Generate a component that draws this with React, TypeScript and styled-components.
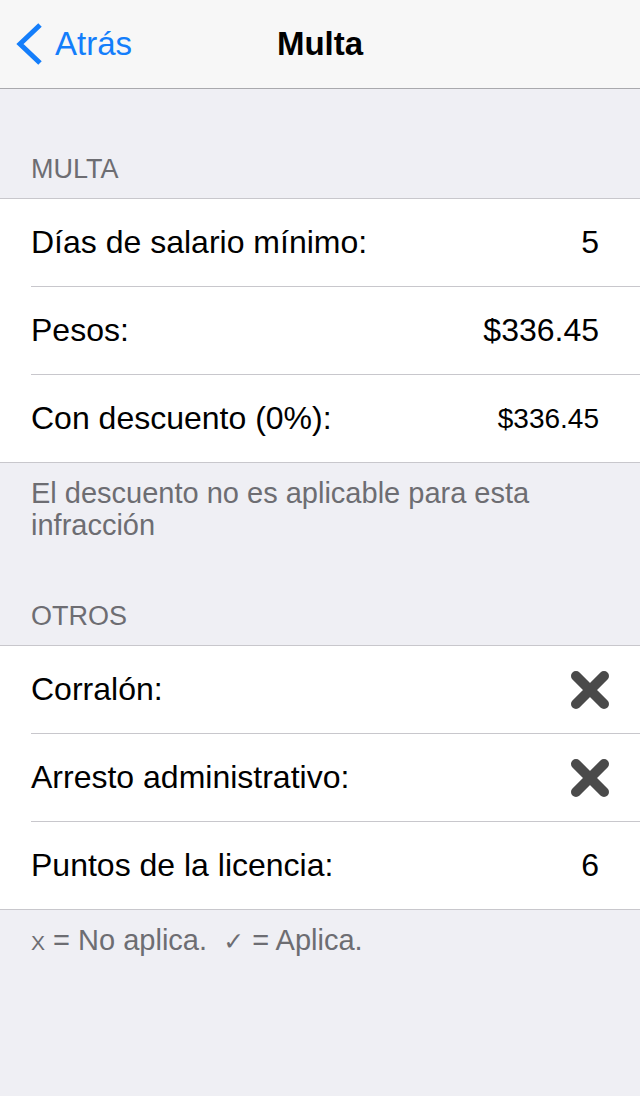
import React from "react";
import styled, { createGlobalStyle } from "styled-components";

const GlobalStyle = createGlobalStyle`
  html, body {
    margin: 0;
    padding: 0;
    background: #efeff4;
  }
  body {
    font-family: "Liberation Sans", Arial, sans-serif;
    -webkit-font-smoothing: antialiased;
  }
`;

const Screen = styled.div`
  width: 640px;
  min-height: 1096px;
  background: #efeff4;
  display: flex;
  flex-direction: column;
`;

const NavBar = styled.header`
  height: 88px;
  background: #f7f7f7;
  border-bottom: 1px solid #a9a9ad;
  display: grid;
  grid-template-columns: 1fr auto 1fr;
  align-items: center;
`;

const BackButton = styled.button`
  justify-self: start;
  display: flex;
  align-items: center;
  gap: 12px;
  background: none;
  border: none;
  padding: 0 0 0 13px;
  margin: 0;
  color: #147efb;
  font-family: inherit;
  font-size: 33px;
  line-height: 40px;
  cursor: pointer;
`;

const Chevron = styled.svg`
  width: 30px;
  height: 42px;
  display: block;
`;

const Title = styled.h1`
  margin: 0;
  font-size: 33px;
  font-weight: 700;
  line-height: 40px;
  color: #000;
`;

const SectionHeader = styled.div<{ $top: number }>`
  padding: ${(p) => p.$top}px 31px 13px;
  font-size: 27px;
  line-height: 32px;
  color: #6d6d72;
  text-transform: uppercase;
`;

const Group = styled.section`
  background: #fff;
  border-top: 1px solid #c8c7cc;
  border-bottom: 1px solid #c8c7cc;
`;

const Row = styled.div`
  padding-left: 31px;
  & + & > div {
    border-top: 1px solid #c8c7cc;
  }
`;

const RowInner = styled.div`
  height: 87px;
  padding-right: 41px;
  display: flex;
  align-items: center;
  justify-content: space-between;
`;

const Label = styled.span`
  font-size: 32px;
  color: #000;
`;

const Value = styled.span<{ $size?: number }>`
  font-size: ${(p) => p.$size ?? 32}px;
  color: #000;
`;

const CrossIcon = styled.svg`
  width: 44px;
  height: 44px;
  margin-right: -13px;
  display: block;
`;

const Footer = styled.div`
  padding: 14px 31px 0;
  font-size: 29px;
  line-height: 32px;
  color: #6d6d72;
`;

const SmallX = styled.span`
  font-size: 21px;
`;

const Check = styled.span`
  font-family: "DejaVu Sans", sans-serif;
  font-size: 25px;
`;

const Cross = () => (
  <CrossIcon viewBox="0 0 44 44">
    <path
      d="M8 8 L36 36 M36 8 L8 36"
      stroke="#4a4a4a"
      strokeWidth="10"
      strokeLinecap="round"
      fill="none"
    />
  </CrossIcon>
);

type Item = { label: string; value?: string; size?: number; cross?: boolean };

const multa: Item[] = [
  { label: "Días de salario mínimo:", value: "5" },
  { label: "Pesos:", value: "$336.45" },
  { label: "Con descuento (0%):", value: "$336.45", size: 28 },
];

const otros: Item[] = [
  { label: "Corralón:", cross: true },
  { label: "Arresto administrativo:", cross: true },
  { label: "Puntos de la licencia:", value: "6" },
];

const Rows = ({ items }: { items: Item[] }) => (
  <Group>
    {items.map((it) => (
      <Row key={it.label}>
        <RowInner>
          <Label>{it.label}</Label>
          {it.cross ? <Cross /> : <Value $size={it.size}>{it.value}</Value>}
        </RowInner>
      </Row>
    ))}
  </Group>
);

export default function App() {
  return (
    <Screen>
      <GlobalStyle />
      <NavBar>
        <BackButton>
          <Chevron viewBox="0 0 30 42">
            <path
              d="M27 2 L7 21 L27 40"
              stroke="#147efb"
              strokeWidth="5"
              fill="none"
            />
          </Chevron>
          Atrás
        </BackButton>
        <Title>Multa</Title>
        <div />
      </NavBar>
      <SectionHeader $top={64}>Multa</SectionHeader>
      <Rows items={multa} />
      <Footer>El descuento no es aplicable para esta infracción</Footer>
      <SectionHeader $top={59}>Otros</SectionHeader>
      <Rows items={otros} />
      <Footer>
        <SmallX>X</SmallX> = No aplica.&nbsp; <Check>✓</Check> = Aplica.
      </Footer>
    </Screen>
  );
}
